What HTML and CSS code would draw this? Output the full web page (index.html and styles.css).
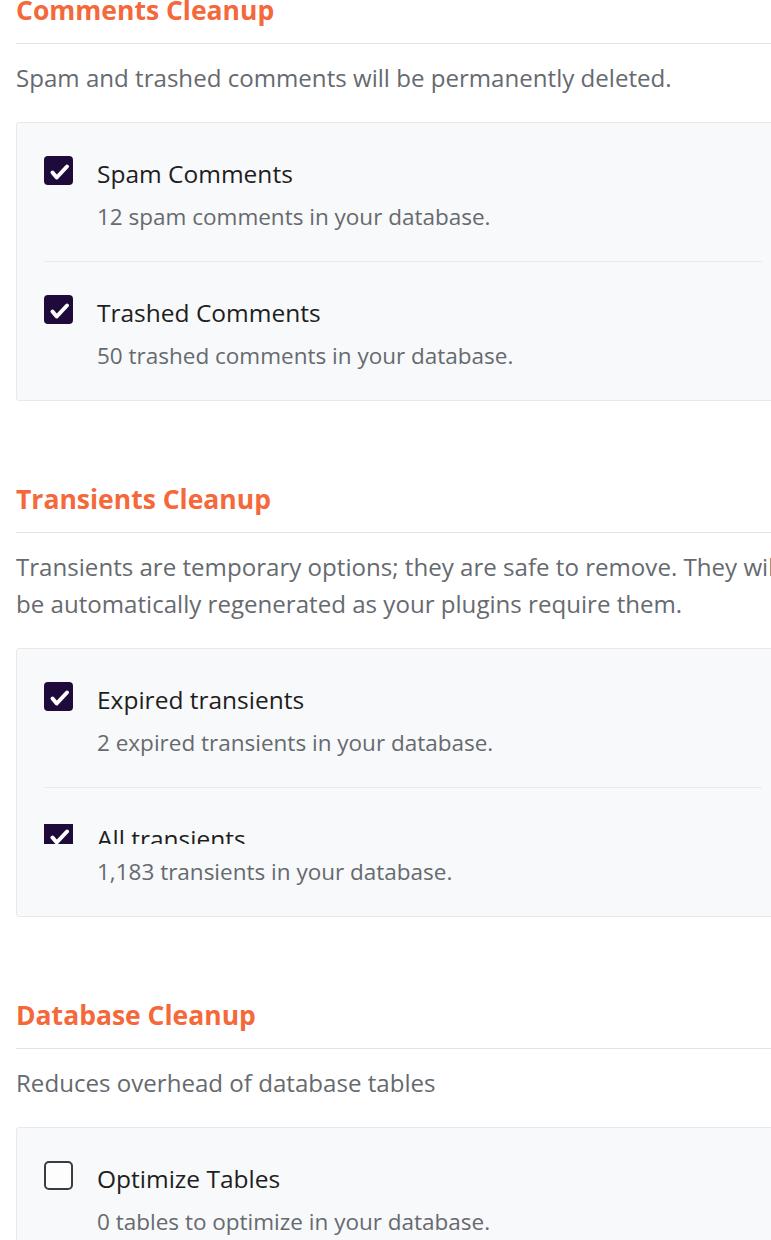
FILE: index.html
```html
<!DOCTYPE html>
<html lang="en">

<head>
    <meta charset="UTF-8">
    <meta name="viewport" content="width=device-width, initial-scale=1.0">
    <title>Cleanup</title>

    <link rel="stylesheet" href="styles.css">
</head>

<body>
    <div class="page">
        <section class="group">
            <h2 class="group-title">Comments Cleanup</h2>
            <p class="group-desc">Spam and trashed comments will be permanently deleted.</p>
            <div class="card">
                <div class="item">
                    <label class="item-label">
                        <span class="check checked">
                            <svg viewBox="0 0 29 29"><path d="M8.5 16.5l4.2 5 10.3-11"></path></svg>
                        </span>
                        Spam Comments
                    </label>
                    <p class="item-note">12 spam comments in your database.</p>
                </div>
                <div class="item">
                    <label class="item-label">
                        <span class="check checked">
                            <svg viewBox="0 0 29 29"><path d="M8.5 16.5l4.2 5 10.3-11"></path></svg>
                        </span>
                        Trashed Comments
                    </label>
                    <p class="item-note">50 trashed comments in your database.</p>
                </div>
            </div>
        </section>

        <section class="group">
            <h2 class="group-title">Transients Cleanup</h2>
            <p class="group-desc">Transients are temporary options; they are safe to remove. They will be automatically regenerated as your plugins require them.</p>
            <div class="card">
                <div class="item">
                    <label class="item-label">
                        <span class="check checked">
                            <svg viewBox="0 0 29 29"><path d="M8.5 16.5l4.2 5 10.3-11"></path></svg>
                        </span>
                        Expired transients
                    </label>
                    <p class="item-note">2 expired transients in your database.</p>
                </div>
                <div class="item">
                    <label class="item-label cut">
                        <span class="check checked">
                            <svg viewBox="0 0 29 29"><path d="M8.5 16.5l4.2 5 10.3-11"></path></svg>
                        </span>
                        All transients
                    </label>
                    <p class="item-note">1,183 transients in your database.</p>
                </div>
            </div>
        </section>

        <section class="group">
            <h2 class="group-title">Database Cleanup</h2>
            <p class="group-desc">Reduces overhead of database tables</p>
            <div class="card">
                <div class="item">
                    <label class="item-label">
                        <span class="check"></span>
                        Optimize Tables
                    </label>
                    <p class="item-note">0 tables to optimize in your database.</p>
                </div>
            </div>
        </section>
    </div>
</body>

</html>
```

FILE: styles.css
```css
html,
body {
    margin: 0;
    overflow-x: hidden;
    background: #fff;
}

body {
    font-family: "Open Sans", "Noto Sans", sans-serif;
    color: #1e1e1e;
}

.page {
    width: 774px;
    padding: 0 0 0 16px;
    margin-top: -5px;
}

.group {
    margin-bottom: 83px;
}

.group-title {
    margin: 0;
    padding-bottom: 17px;
    border-bottom: 1px solid #e2e4e7;
    font-size: 26.5px;
    line-height: 31px;
    font-weight: 700;
    color: #f4683a;
}

.group-desc {
    margin: 15px 0 26px;
    font-size: 24.1px;
    line-height: 37px;
    color: #666a6f;
}

.card {
    padding: 0 27px;
    background: #f8f9fa;
    border: 1px solid #e6e8eb;
    border-radius: 3px;
}

.item {
    padding: 36px 0 29px;
}

.item + .item {
    border-top: 1px solid #e8eaed;
}

.item-label {
    display: flex;
    align-items: center;
    gap: 24px;
    height: 30px;
    font-size: 24.5px;
    line-height: 30px;
    cursor: pointer;
}

.item-label.cut {
    height: 20px;
    overflow: hidden;
    align-items: flex-start;
}

.check {
    flex: none;
    width: 25px;
    height: 25px;
    margin-top: -8px;
    border: 2.5px solid #3c3c3c;
    border-radius: 5px;
    background: #fdfdfd;
}

.item-label.cut .check {
    margin-top: -3px;
}

.check.checked {
    width: 29px;
    height: 29px;
    border: none;
    border-radius: 4px;
    background: #1e0b3c;
}

.check svg {
    display: block;
    width: 29px;
    height: 29px;
    fill: none;
    stroke: #fff;
    stroke-width: 4;
    stroke-linecap: round;
    stroke-linejoin: round;
}

.item-note {
    margin: 13px 0 0 53px;
    font-size: 22.5px;
    line-height: 30px;
    color: #666a6f;
}
```
